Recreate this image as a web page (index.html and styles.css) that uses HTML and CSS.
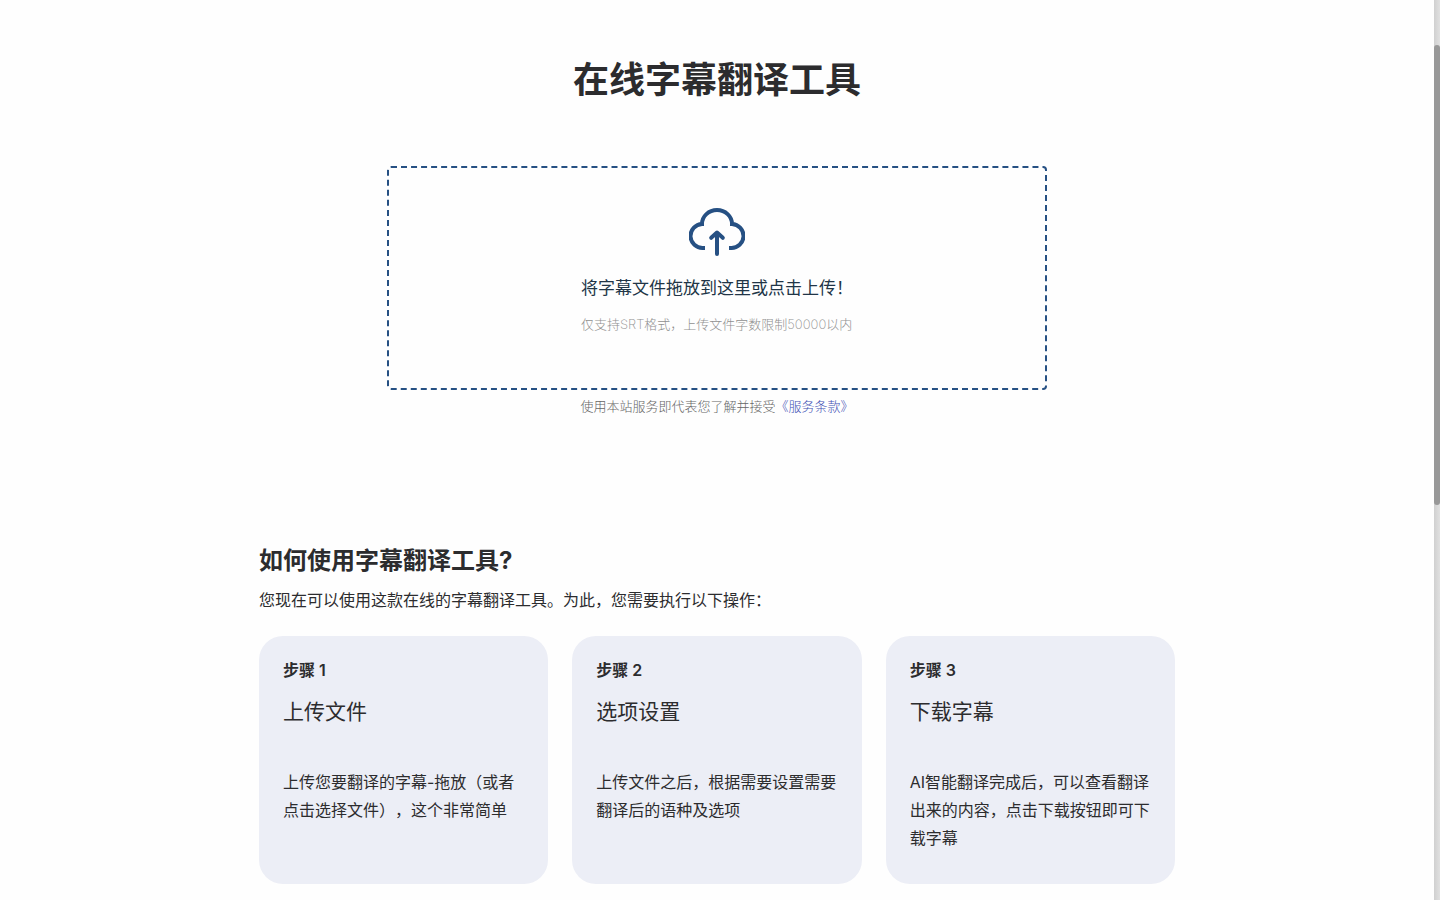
FILE: index.html
```html
<!DOCTYPE html>
<html lang="zh-CN">
<head>
  <meta charset="utf-8">
  <title>在线字幕翻译工具</title>
  <link rel="stylesheet" href="styles.css">
</head>
<body>
<div class="page">
  <main class="content">
    <h1>在线字幕翻译工具</h1>

    <label class="upload" for="file">
      <input type="file" id="file" accept=".srt">
      <span class="upload-inner">
        <svg class="upload-icon" viewBox="0 0 56 48" width="56" height="48" fill="none" stroke="currentColor" stroke-width="4" aria-hidden="true">
          <path d="M16 40H14A12 12 0 0 1 13 16A15 14 0 0 1 43 16A12 12 0 0 1 42 40H40"/>
          <path d="M28 25V46M22.2 29.8L28 24.5L33.8 29.8" stroke-linecap="round" stroke-linejoin="round"/>
        </svg>
        <span class="upload-text">将字幕文件拖放到这里或点击上传！</span>
        <span class="upload-hint">仅支持SRT格式，上传文件字数限制50000以内</span>
      </span>
    </label>
    <p class="terms">使用本站服务即代表您了解并接受<a href="#">《服务条款》</a></p>

    <section class="guide">
      <h2>如何使用字幕翻译工具?</h2>
      <p class="intro">您现在可以使用这款在线的字幕翻译工具。为此，您需要执行以下操作：</p>
      <div class="steps">
        <div class="step">
          <div class="step-number">步骤 1</div>
          <h3>上传文件</h3>
          <p>上传您要翻译的字幕-拖放（或者点击选择文件），这个非常简单</p>
        </div>
        <div class="step">
          <div class="step-number">步骤 2</div>
          <h3>选项设置</h3>
          <p>上传文件之后，根据需要设置需要翻译后的语种及选项</p>
        </div>
        <div class="step">
          <div class="step-number">步骤 3</div>
          <h3>下载字幕</h3>
          <p>AI智能翻译完成后，可以查看翻译出来的内容，点击下载按钮即可下载字幕</p>
        </div>
      </div>
    </section>
  </main>
  <div class="scrollbar"><div class="thumb"></div></div>
</div>
</body>
</html>
```

FILE: styles.css
```css
* {
  box-sizing: border-box;
}
body {
  margin: 0;
  background-color: #fefefe;
  color: #2c2c2e;
  font-family: Inter, "Noto Sans CJK SC", sans-serif;
  font-size: 16px;
  text-spacing-trim: space-all;
}
h1, h2, h3, p {
  margin: 0;
}
.page {
  display: flex;
  height: 100vh;
}
.content {
  flex: 1;
  display: flex;
  flex-direction: column;
  align-items: center;
  padding: 53px 24px 0;
  overflow: hidden;
}
h1 {
  font-size: 36px;
  line-height: 54px;
  font-weight: 700;
}

/* upload box */
.upload {
  display: flex;
  justify-content: center;
  width: 100%;
  max-width: 660px;
  margin-top: 59px;
  padding: 40px 24px 54px;
  border: 2px dashed #265083;
  border-radius: 4px;
  cursor: pointer;
}
.upload input {
  position: absolute;
  opacity: 0;
  width: 1px;
  height: 1px;
}
.upload-inner {
  display: flex;
  flex-direction: column;
}
.upload-icon {
  align-self: center;
  color: #265083;
}
.upload-text {
  margin-top: 20px;
  color: #213547;
  font-size: 17px;
  line-height: 24px;
}
.upload-hint {
  margin-top: 14px;
  color: #909090;
  font-size: 13px;
  line-height: 20px;
  font-weight: 200;
}
.terms {
  margin-top: 6px;
  color: #666;
  font-size: 13px;
  line-height: 20px;
  font-weight: 300;
}
.terms a {
  color: #3f51b5;
  text-decoration: none;
}

/* how to use */
.guide {
  width: 100%;
  max-width: 916px;
  margin-top: 129px;
}
h2 {
  font-size: 24px;
  line-height: 32px;
  font-weight: 700;
}
.intro {
  margin-top: 11px;
  line-height: 24px;
}
.steps {
  display: grid;
  grid-template-columns: repeat(3, 1fr);
  gap: 24px;
  margin-top: 24px;
}
.step {
  padding: 24px 24px 32px;
  border-radius: 24px;
  background-color: #eceef6;
}
.step-number {
  line-height: 20px;
  font-weight: 600;
}
h3 {
  margin-top: 16px;
  font-size: 21px;
  line-height: 32px;
  font-weight: 400;
}
.step p {
  margin-top: 40px;
  line-height: 28px;
}

/* page scrollbar */
.scrollbar {
  width: 6px;
  padding-top: 45px;
  background: linear-gradient(to right, #d0d0d0, #e0e0e0);
}
.thumb {
  height: 460px;
  border-radius: 3px;
  background-color: #989898;
}
```
